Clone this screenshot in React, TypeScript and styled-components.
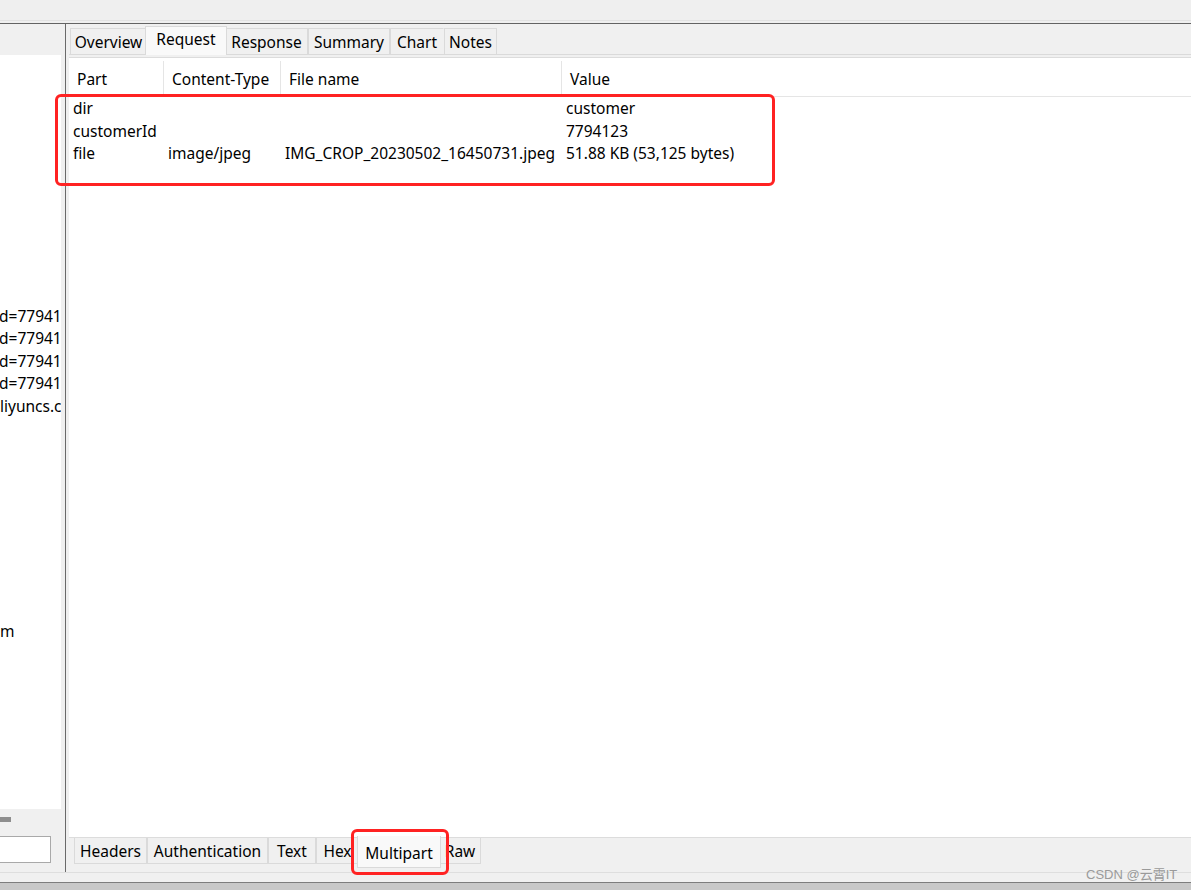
import React from "react";
import styled, { createGlobalStyle } from "styled-components";

const Global = createGlobalStyle`
  html, body { margin: 0; padding: 0; background: #f0f0f0; }
  body { font-family: "Noto Sans", "Open Sans", "Noto Sans CJK SC", sans-serif; font-size: 15.5px; color: #000; }
  * { box-sizing: border-box; }
`;

const Page = styled.div`
  position: relative;
  width: 1191px;
  height: 890px;
  overflow: hidden;
  display: flex;
  flex-direction: column;
  background: #f0f0f0;
`;

const TopBar = styled.div`
  height: 24px;
  flex: none;
  background: #efefef;
  border-top: 20px solid #efefef;
  box-shadow: inset 0 1px 0 #e2e2e2;
  border-bottom: 1px solid #636363;
`;

const Main = styled.div`
  flex: none;
  height: 848px;
  display: flex;
`;

const LeftPanel = styled.div`
  width: 65px;
  flex: none;
  display: flex;
  flex-direction: column;
  background: #f0f0f0;
  padding-top: 31px;
  padding-right: 4px;
`;

const LeftList = styled.div`
  height: 754px;
  background: #fff;
  overflow: hidden;
  padding-top: 2px;
`;

const LeftRow = styled.div<{ $shift?: number }>`
  height: 22.5px;
  line-height: 22.5px;
  white-space: nowrap;
  overflow: hidden;
  margin-left: ${(p) => p.$shift ?? 0}px;
`;

const ScrollTrack = styled.div`
  height: 27px;
  padding-top: 8px;
`;

const ScrollThumb = styled.div`
  width: 11px;
  height: 5px;
  background: #8e8e8e;
`;

const FilterInput = styled.div`
  width: 51px;
  height: 27px;
  background: #fff;
  border: 1px solid #a9a9a9;
  border-left: none;
`;

const Splitter = styled.div`
  width: 1px;
  flex: none;
  background: #6a6a6a;
`;

const RightPanel = styled.div`
  flex: 1;
  display: flex;
  flex-direction: column;
  padding-left: 3px;
  min-width: 0;
`;

const TabStrip = styled.div`
  height: 30px;
  flex: none;
  display: flex;
  align-items: flex-end;
  padding-left: 1px;
`;

const BottomStrip = styled.div`
  height: 34px;
  flex: none;
  display: flex;
  align-items: flex-start;
  padding-left: 5px;
`;

const Tab = styled.div<{ $w: number; $active?: boolean; $bottom?: boolean; $noRight?: boolean }>`
  width: ${(p) => p.$w + (p.$active ? 4 : 0)}px;
  margin-left: ${(p) => (p.$active ? -2 : 0)}px;
  margin-right: ${(p) => (p.$active ? -2 : 0)}px;
  height: ${(p) => (p.$active ? (p.$bottom ? 32 : 29) : 26)}px;
  ${(p) => (p.$bottom ? "margin-top: " + (p.$active ? "-2px" : "0") + ";" : "margin-bottom: " + (p.$active ? "-1px" : "0") + ";")}
  display: flex;
  align-items: center;
  justify-content: center;
  white-space: nowrap;
  background: ${(p) => (p.$active ? "#f9f9f9" : "#f0f0f0")};
  border: 1px solid #dadada;
  ${(p) => (p.$bottom ? "border-top: none;" : "border-bottom: none;")}
  ${(p) => (p.$noRight ? "border-right-color: transparent;" : "")}
  position: ${(p) => (p.$active ? "relative" : "static")};
  z-index: ${(p) => (p.$active ? 1 : 0)};
  padding-top: ${(p) => (p.$active && p.$bottom ? 3 : 0)}px;
  padding-bottom: ${(p) => (p.$active && !p.$bottom ? 4 : 0)}px;
`;

const TabPage = styled.div`
  flex: 1;
  border-top: 1px solid #dadada;
  padding-top: 2px;
  display: flex;
  flex-direction: column;
  min-height: 0;
`;

const ListBox = styled.div`
  flex: 1;
  background: #fff;
  border-top: 1px solid #dcdcdc;
  border-bottom: 1px solid #dcdcdc;
  padding-top: 3px;
`;

const Grid = styled.div`
  display: grid;
  grid-template-columns: 95px 117px 281px 1fr;
`;

const HeadCell = styled.div<{ $sep?: boolean }>`
  height: 36px;
  line-height: 36px;
  padding-left: 8px;
  border-bottom: 1px solid #e5e5e5;
  border-right: ${(p) => (p.$sep ? "1px solid #e5e5e5" : "none")};
  white-space: nowrap;
`;

const Cell = styled.div`
  height: 22.5px;
  line-height: 22.5px;
  padding-left: 4px;
  white-space: nowrap;
`;

const Footer = styled.div`
  flex: 1;
  border-top: 1px solid #dedede;
  display: flex;
  flex-direction: column;
  justify-content: flex-end;
`;

const FooterLine = styled.div`
  height: 3px;
  border-bottom: 1px solid #7d7d7d;
`;

const FooterBar = styled.div`
  height: 7px;
  background: #c8c8c8;
`;

const Annotation = styled.div<{ $x: number; $y: number; $w: number; $h: number }>`
  position: absolute;
  left: ${(p) => p.$x}px;
  top: ${(p) => p.$y}px;
  width: ${(p) => p.$w}px;
  height: ${(p) => p.$h}px;
  border: 3px solid #ff2222;
  border-radius: 6px;
  pointer-events: none;
  z-index: 5;
`;

const Watermark = styled.div`
  position: absolute;
  left: 1086px;
  top: 864px;
  font-family: "Liberation Sans", "Noto Sans CJK SC", sans-serif;
  font-size: 13px;
  color: #9a9a9a;
  z-index: 6;
  white-space: nowrap;
`;

const leftLines: { text: string; shift?: number }[] = [];
for (let i = 0; i < 34; i++) leftLines.push({ text: "" });
leftLines[11] = { text: "d=77941", shift: -1 };
leftLines[12] = { text: "d=77941", shift: -1 };
leftLines[13] = { text: "d=77941", shift: -1 };
leftLines[14] = { text: "d=77941", shift: -1 };
leftLines[15] = { text: "liyuncs.c", shift: 0 };
leftLines[25] = { text: "m", shift: 0 };

const rows = [
  ["dir", "", "", "customer"],
  ["customerId", "", "", "7794123"],
  ["file", "image/jpeg", "IMG_CROP_20230502_16450731.jpeg", "51.88 KB (53,125 bytes)"],
];

const topTabs = [
  { label: "Overview", w: 77 },
  { label: "Request", w: 78, active: true },
  { label: "Response", w: 83 },
  { label: "Summary", w: 82 },
  { label: "Chart", w: 54, noRight: true },
  { label: "Notes", w: 53 },
];

const bottomTabs = [
  { label: "Headers", w: 73 },
  { label: "Authentication", w: 121 },
  { label: "Text", w: 48 },
  { label: "Hex", w: 43 },
  { label: "Multipart", w: 80, active: true },
  { label: "Raw", w: 42 },
];

export default function App() {
  return (
    <>
      <Global />
      <Page>
        <TopBar />
        <Main>
          <LeftPanel>
            <LeftList>
              {leftLines.map((l, i) => (
                <LeftRow key={i} $shift={l.shift}>
                  {l.text}
                </LeftRow>
              ))}
            </LeftList>
            <ScrollTrack>
              <ScrollThumb />
            </ScrollTrack>
            <FilterInput />
          </LeftPanel>
          <Splitter />
          <RightPanel>
            <TabStrip>
              {topTabs.map((t) => (
                <Tab key={t.label} $w={t.w} $active={t.active} $noRight={t.noRight}>
                  {t.label}
                </Tab>
              ))}
            </TabStrip>
            <TabPage>
              <ListBox>
                <Grid>
                  <HeadCell $sep>Part</HeadCell>
                  <HeadCell $sep>Content-Type</HeadCell>
                  <HeadCell $sep>File name</HeadCell>
                  <HeadCell>Value</HeadCell>
                  {rows.map((r, i) =>
                    r.map((c, j) => <Cell key={i + "-" + j}>{c}</Cell>)
                  )}
                </Grid>
              </ListBox>
              <BottomStrip>
                {bottomTabs.map((t) => (
                  <Tab key={t.label} $w={t.w} $active={t.active} $bottom>
                    {t.label}
                  </Tab>
                ))}
              </BottomStrip>
            </TabPage>
          </RightPanel>
        </Main>
        <Footer>
          <FooterLine />
          <FooterBar />
        </Footer>
        <Annotation $x={55} $y={94} $w={720} $h={92} />
        <Annotation $x={351} $y={829} $w={98} $h={46} />
        <Watermark>CSDN @云霄IT</Watermark>
      </Page>
    </>
  );
}
